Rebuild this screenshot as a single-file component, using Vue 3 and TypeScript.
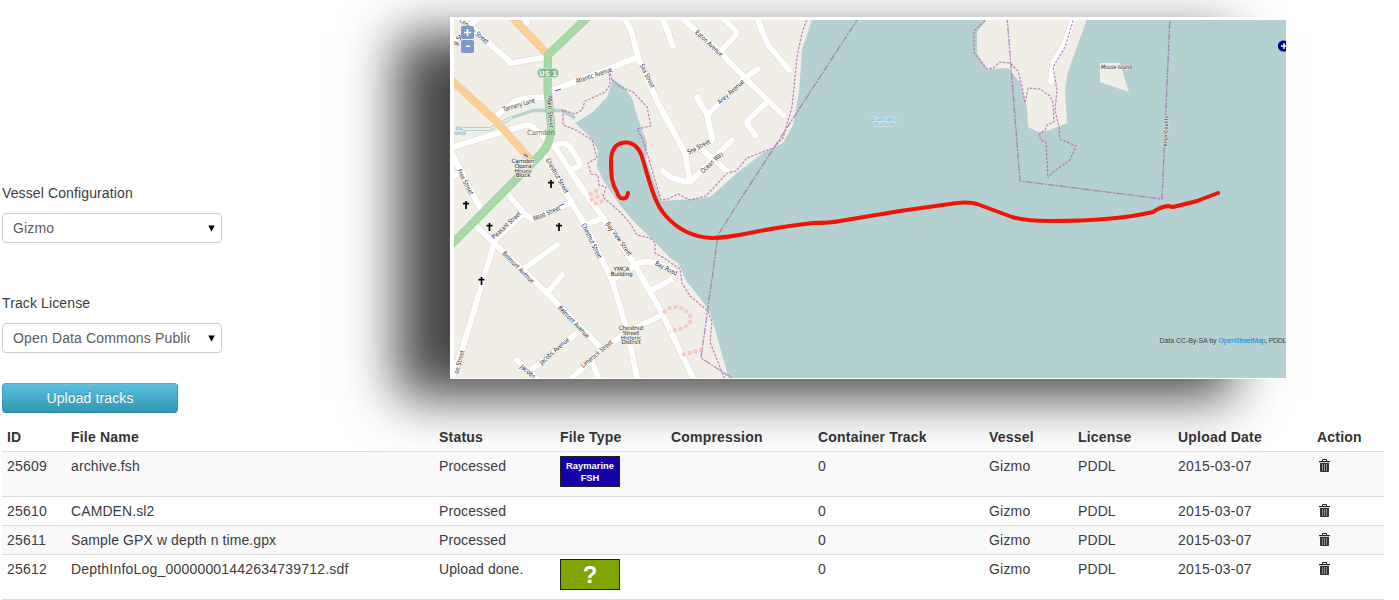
<script setup lang="ts">
interface Track {
  id: number
  file: string
  status: string
  badge?: 'fsh' | 'unknown'
  container: number
  vessel: string
  license: string
  date: string
}

interface Label {
  text: string
  x: number
  y: number
  angle: number
  length: number
}

const tracks: Track[] = [
  { id: 25609, file: 'archive.fsh', status: 'Processed', badge: 'fsh', container: 0, vessel: 'Gizmo', license: 'PDDL', date: '2015-03-07' },
  { id: 25610, file: 'CAMDEN.sl2', status: 'Processed', container: 0, vessel: 'Gizmo', license: 'PDDL', date: '2015-03-07' },
  { id: 25611, file: 'Sample GPX w depth n time.gpx', status: 'Processed', container: 0, vessel: 'Gizmo', license: 'PDDL', date: '2015-03-07' },
  { id: 25612, file: 'DepthInfoLog_00000001442634739712.sdf', status: 'Upload done.', badge: 'unknown', container: 0, vessel: 'Gizmo', license: 'PDDL', date: '2015-03-07' },
]

const selects = [
  { label: 'Vessel Configuration', value: 'Gizmo' },
  { label: 'Track License', value: 'Open Data Commons Public' },
]

// Street geometry, in map pixels
const streets: string[] = [
  'M455 15L476 31L511 63L547 57',
  'M453 42L478 18',
  'M524 16L527 23',
  'M551 91L600 72L638 57',
  'M623 16L631 30L638 57L658 103L685 153L690 182',
  'M663 171Q672 181 690 182L732 140',
  'M700 148L727 171',
  'M685 154L710 142Q713 140 712 136L707 115L697 97',
  'M707 115L745 78L758 69',
  'M680 16L720 52L745 78L783 115',
  'M721 16L734 29Q738 32 735 36L720 52',
  'M662 16L673 46',
  'M756 16L768 45L789 70',
  'M767 102L749 119Q746 122 748 125L755 135',
  'M547 97Q520 98 514 102L495 117',
  'M450 148L495 134L523 126Q531 124 535 129L555 147L573 175L603 218L635 265L662 313L695 382',
  'M555 146Q564 140 570 147L580 163Q580 168 570 169',
  'M545 157L567 195L585 225L612 280L627 330L638 382',
  'M585 225L603 218',
  'M508 194L524 213L532 219L570 203',
  'M495 240L524 213',
  'M450 150L473 195L483 212',
  'M450 178L462 171',
  'M477 227L493 242L547 293L602 349',
  'M494 244L462 350L452 378',
  'M525 268L557 245',
  'M547 293L562 275',
  'M578 332L530 371',
  'M517 360L540 382',
  'M568 382L600 351L627 332L660 316',
  'M592 362L600 382',
  'M612 280L635 265Q642 260 657 263L673 270Q678 276 669 281L652 290',
  'M1074 16L1065 43L1053 63L1051 82',
]

const dashedPaths: string[] = [
  'M612 80L609 69L610 85L605 92L590 99L585 101L582 110L575 114L563 110V125L576 130L592 140L597 158L588 163L591 174L598 175L599 185L606 187L603 197L620 212L630 223L637 235L650 238L655 243L655 253L664 258L680 269L682 283L690 296L708 311L712 322L710 342L716 357L725 380',
  'M612 80L620 87L633 92L647 107L651 126L637 129L643 140L650 163L661 200L668 199L678 194L690 200L706 196L727 173L736 171L747 158L773 148L783 138L792 107L797 57L802 33L808 16',
  'M988 18L974 31V53L982 63L987 69L993 68L1000 62L1010 63L1018 71L1022 86L1025 103L1028 88L1040 89L1050 96L1053 103L1054 122L1047 125L1045 130L1039 135L1041 140L1046 142L1048 178L1053 172L1070 160L1076 146L1060 139L1059 127L1055 110L1057 90L1053 67L1065 47L1074 18',
]

const borders: string[] = [
  'M1007 16L1020 181L1162 199L1170 16',
  'M859 17L740 200L718 235L701 358L735 380',
]

const labels: Label[] = [
  { text: 'Conway Street', x: 474, y: 31, angle: 41, length: 36 },
  { text: 'g St', x: 458, y: 40, angle: -55, length: 12 },
  { text: 'Atlantic Avenue', x: 594, y: 75.5, angle: -19, length: 38 },
  { text: 'Tannery Lane', x: 519, y: 105, angle: -17, length: 33 },
  { text: 'Main Street', x: 550, y: 112, angle: 87, length: 32 },
  { text: 'Sea Street', x: 647, y: 76, angle: 64, length: 26 },
  { text: 'Eaton Avenue', x: 709, y: 43.5, angle: 43, length: 35 },
  { text: 'Arey Avenue', x: 731, y: 92, angle: -42, length: 33 },
  { text: 'Sea Street', x: 699, y: 147, angle: -27, length: 25 },
  { text: 'Ocean Way', x: 712, y: 162.5, angle: -43, length: 28 },
  { text: 'Chestnut Street', x: 557, y: 176, angle: 60, length: 39 },
  { text: 'Free Street', x: 465, y: 182, angle: 63, length: 28 },
  { text: 'Pleasant Street', x: 506.5, y: 225.5, angle: -43, length: 37 },
  { text: 'Wood Street', x: 546.5, y: 213.5, angle: -23, length: 29 },
  { text: 'Chestnut Street', x: 591.5, y: 241, angle: 64, length: 38 },
  { text: 'Bay View Street', x: 618.5, y: 239, angle: 54, length: 40 },
  { text: 'Belmont Avenue', x: 518, y: 267.5, angle: 45, length: 42 },
  { text: 'Belmont Avenue', x: 573.5, y: 322, angle: 46, length: 42 },
  { text: 'Jacobs Avenue', x: 554.5, y: 351, angle: -41, length: 37 },
  { text: 'Limerock Street', x: 597, y: 354, angle: -40, length: 39 },
  { text: 'Jacobs A', x: 530, y: 373.5, angle: 41, length: 24 },
  { text: 'on Street', x: 459.5, y: 362, angle: -75, length: 24 },
  { text: 'Bay Road', x: 666, y: 268.5, angle: 27, length: 24 },
]

const places = [
  { x: 523, y: 163, lines: ['Camden', 'Opera', 'House', 'Block'] },
  { x: 621.5, y: 271, lines: ['YMCA', 'Building'] },
  { x: 631, y: 330, lines: ['Chestnut', 'Street', 'Historic', 'District'] },
]

const crosses: [number, number][] = [
  [551, 184], [466, 205], [489.5, 227], [559, 227], [481.5, 281],
]

// Names made mostly of digits are spaced like the other numeric columns
const isNumeric = (name: string): boolean => /\d{8}/.test(name)
</script>

<template>
  <main class="page">
    <section class="top">
      <form class="settings" @submit.prevent>
        <div v-for="s in selects" :key="s.label" class="field">
          <label class="field-label">{{ s.label }}</label>
          <div class="select" role="listbox">
            <span class="select-value">{{ s.value }}</span>
            <svg class="arrow" width="7" height="7" viewBox="0 0 7 7"><path d="M0.3 0.500H6.700L3.500 6.700Z" fill="#000" /></svg>
          </div>
        </div>
        <button class="upload" type="button">Upload tracks</button>
      </form>

      <div class="map-frame">
        <svg class="map" width="832" height="358" viewBox="454 20 832 358">
          <rect x="454" y="20" width="832" height="358" fill="#f1eee8" />
          <path
            fill="#b5d0d0"
            d="M613 79L623 86L632 98L637 116L647 143L646 160L661 201L693 199L710 197L737 173L763 153L783 143L793 125L799 93L802 50L813 16H1290V382H730L727 372L710 312L700 298L687 282L678 263L670 258L653 240L635 223L620 205L603 180L597 167L598 150L590 137L575 123L593 112L607 97Z"
          />
          <path fill="#f1eee8" d="M989 16L977 32V53L987 69L1008 68L1020 82L1027 107L1028 127L1038 132L1050 130L1067 123L1065 90L1068 72L1088 16Z" />
          <path fill="#f1eee8" d="M1100 63H1120L1129 92L1100 82Z" />

          <g fill="none" stroke-linejoin="round">
            <path d="M460 127.500H490L512 116" stroke="#b5d0d0" stroke-width="1" />
            <path d="M460 130.500H490L512 119" stroke="#b5d0d0" stroke-width="1" />
            <path d="M512 117.500L533 110.500H562L575 118" stroke="#b5d0d0" stroke-width="3.400" />
            <g stroke="#e0dcd8" stroke-width="7" stroke-linecap="round">
              <path v-for="d in streets" :key="d" :d="d" />
            </g>
            <g stroke="#fff" stroke-width="5.800" stroke-linecap="round">
              <path v-for="d in streets" :key="d" :d="d" />
            </g>
            <g stroke="#e3c9a6" stroke-width="7.800">
              <path d="M508 13L548 55" />
              <path d="M450 79L495 120L530 159" />
            </g>
            <g stroke="#fdcf95" stroke-width="6.800">
              <path d="M508 13L548 55" />
              <path d="M450 79L495 120L530 159" />
            </g>
            <path d="M593 12L548 55L547.500 90L551 125Q552 143 541 154L450 246" stroke="#9ccb9c" stroke-width="8.200" />
            <path d="M593 12L548 55L547.500 90L551 125Q552 143 541 154L450 246" stroke="#a7d9a7" stroke-width="7" />

            <g stroke="#f6c9c6" stroke-width="4" stroke-dasharray="4 2">
              <path d="M663 313Q677 300 690 315Q694 328 670 331" />
              <path d="M682 355L703 349" />
              <path d="M589 195L600 189M590 200L602 195M594 204L605 200" />
            </g>
            <g stroke="#b464b4" stroke-opacity=".8" stroke-width="1.200" stroke-dasharray="2.600 1.400">
              <path v-for="d in dashedPaths" :key="d" :d="d" />
            </g>
            <g stroke="#9d6fad" stroke-opacity=".75" stroke-width="1.300" stroke-dasharray="7 1.200 2 1.200">
              <path v-for="d in borders" :key="d" :d="d" />
            </g>
          </g>
          <path d="M555 91L561 89M524 154L528 157M547 160L549 163M559 206L564 204" stroke="#5c5cf0" stroke-width="1.300" />

          <g class="street-label">
            <text
              v-for="(l, i) in labels"
              :key="i"
              :transform="`translate(${l.x} ${l.y}) rotate(${l.angle})`"
              y="2"
              :textLength="l.length"
              lengthAdjust="spacingAndGlyphs"
            >{{ l.text }}</text>
          </g>
          <g v-for="p in places" :key="p.x" class="place">
            <text v-for="(t, i) in p.lines" :key="t" :x="p.x" :y="p.y + i * 4.8">{{ t }}</text>
          </g>
          <text class="town" x="541" y="135" textLength="28">Camden</text>
          <text class="water" x="884" y="120.500">Camden</text>
          <text class="water" x="884" y="125.500">Harbor</text>
          <text class="water pond" x="459" y="130">os</text>
          <text class="water pond" x="460" y="135">ond</text>
          <text class="island" x="1116.500" y="68.500" textLength="31" lengthAdjust="spacingAndGlyphs">Mouse Island</text>
          <text class="county" transform="translate(1167.500 131) rotate(-88)" textLength="31">Knox County</text>

          <rect x="537.500" y="68.500" width="21" height="9" rx="4" fill="#8ab68a" stroke="#c5dfc2" />
          <text class="shield" x="548" y="75.600">US 1</text>

          <g stroke="#000" stroke-width="1.700">
            <path v-for="c in crosses" :key="c.join()" :d="`M${c[0]} ${c[1] - 4}v8M${c[0] - 3} ${c[1] - 1.3}h6`" />
          </g>

          <path
            d="M628 193Q627 199 623 198.500Q619 199 617 192C612 184 611 176 611 162C611 149 616 143 625 142.500C635 142 640 149 643 160C650 183 654 202 665 215C676 228 692 237 712 238C740 238 755 229 813 223Q830 223 840 221L900 211L950 204Q967 201 977 204L1012 217Q1025 221 1050 221Q1115 221 1153 212Q1160 207 1168 206L1173 207L1197 201L1218 193"
            fill="none" stroke="#ee1505" stroke-width="4" stroke-linecap="round" stroke-linejoin="round"
          />

          <rect x="461" y="26" width="13" height="13" rx="2" fill="#7c9bc6" />
          <rect x="461" y="40" width="13" height="13" rx="2" fill="#7c9bc6" />
          <path d="M464 32.500H471M467.500 29V36M466 46.200H470" stroke="#fff" stroke-width="1.600" />
          <circle cx="1283.500" cy="46" r="5.600" fill="#00008b" />
          <path d="M1281 46H1287M1284 43V49" stroke="#fff" stroke-width="1.500" />

          <text class="credit" x="1159.500" y="343" textLength="57">Data CC-By-SA by</text>
          <text class="credit link" x="1218.500" y="343" textLength="47">OpenStreetMap</text>
          <text class="credit" x="1265.500" y="343" textLength="21">, PDDL</text>
        </svg>
      </div>
    </section>

    <table class="tracks">
      <colgroup>
        <col class="c-id"><col class="c-file"><col class="c-status"><col class="c-type"><col class="c-comp">
        <col class="c-cont"><col class="c-vessel"><col class="c-lic"><col class="c-date"><col class="c-act">
      </colgroup>
      <thead>
        <tr>
          <th>ID</th><th>File Name</th><th>Status</th><th>File Type</th><th>Compression</th>
          <th>Container Track</th><th>Vessel</th><th>License</th><th>Upload Date</th><th>Action</th>
        </tr>
      </thead>
      <tbody>
        <tr v-for="t in tracks" :key="t.id" :class="{ tall: t.badge }">
          <td>{{ t.id }}</td>
          <td :class="{ words: !isNumeric(t.file) }">{{ t.file }}</td>
          <td class="words">{{ t.status }}</td>
          <td>
            <div v-if="t.badge === 'fsh'" class="badge fsh">Raymarine<br>FSH</div>
            <div v-else-if="t.badge === 'unknown'" class="badge unknown">?</div>
          </td>
          <td></td>
          <td>{{ t.container }}</td>
          <td>{{ t.vessel }}</td>
          <td class="words">{{ t.license }}</td>
          <td>{{ t.date }}</td>
          <td>
            <svg class="trash" width="11" height="13" viewBox="0 0 11 13">
              <path d="M3.500 2V.5H7.500V2" fill="none" stroke="#222" />
              <path d="M0 2H11V3.200H0Z" fill="#222" />
              <path d="M1 4H10V12Q10 13 9 13H2Q1 13 1 12Z" fill="#333" />
              <path d="M3.500 5V12M5.500 5V12M7.500 5V12" stroke="#999" stroke-width=".9" />
            </svg>
          </td>
        </tr>
      </tbody>
    </table>
  </main>
</template>

<style>
body {
  margin: 0;
  background: #fff;
}
</style>

<style scoped>
.page {
  box-sizing: border-box;
  width: 1399px;
  height: 600px;
  overflow: hidden;
  font: 14px/20px "Liberation Sans", Arial, sans-serif;
  color: #3c3c3c;
}
.top {
  display: flex;
  height: 423px;
}
.settings {
  width: 448px;
  padding: 183px 0 0 2px;
  box-sizing: border-box;
}
.field {
  height: 110px;
}
.field:nth-child(2) {
  height: 90px;
}
.field-label {
  display: block;
  height: 30px;
  letter-spacing: 0.12px;
}
.select {
  display: flex;
  align-items: center;
  box-sizing: border-box;
  width: 220px;
  height: 30px;
  padding: 0 6px 0 10px;
  border: 1px solid #ccc;
  border-radius: 4px;
  background: #fff;
  color: #5c5c5c;
}
.select-value {
  width: 177px;
  overflow: hidden;
  white-space: nowrap;
  letter-spacing: 0.15px;
}
.arrow {
  margin-left: auto;
}
.upload {
  display: block;
  width: 176px;
  height: 30px;
  padding: 0;
  border: 1px solid #3a96b2;
  border-color: #4fadc9 #3a9ab8 #2a85a0;
  border-radius: 4px;
  background: linear-gradient(#5bc0de, #2f96b4);
  color: #fff;
  font: inherit;
  letter-spacing: 0.12px;
  text-shadow: 0 -1px 0 rgba(0, 0, 0, 0.25);
}
.map-frame {
  box-sizing: border-box;
  width: 836px;
  height: 362px;
  margin: 17px 0 0 2px;
  padding: 3px 0 1px 4px;
  background: #fff;
  box-shadow: -53px 18px 50px #474747;
}
.map {
  display: block;
}
.map text {
  text-anchor: middle;
  font-family: "DejaVu Sans", "Noto Sans", sans-serif;
  font-size: 6px;
  fill: #2a2a2a;
}
.map .street-label text {
  font-size: 6.6px;
  stroke: #fff;
  stroke-width: 0.8px;
  paint-order: stroke;
}
.map .place text {
  font-size: 5.8px;
  letter-spacing: -0.2px;
  stroke: #f7f5f1;
  stroke-width: 1.5px;
  paint-order: stroke;
}
.map .town {
  font-size: 7px;
  fill: #777;
}
.map .water {
  font-size: 6px;
  fill: #6fa9d6;
  stroke: #e0eded;
  stroke-width: 1px;
  paint-order: stroke;
}
.map .island {
  font-style: italic;
  stroke: #f1f1ee;
  stroke-width: 1px;
  paint-order: stroke;
}
.map .county {
  font-size: 5px;
  stroke: #dfe6e6;
  stroke-width: 1px;
  paint-order: stroke;
}
.map .shield {
  font-size: 7px;
  font-weight: bold;
  fill: #f2f8f2;
}
.map .credit {
  text-anchor: start;
  font-family: "Liberation Sans", Arial, sans-serif;
  font-size: 7px;
  fill: #444;
}
.map .credit.link {
  fill: #1585d0;
}
.tracks {
  position: relative;
  width: 1382px;
  margin-left: 2px;
  table-layout: fixed;
  border-collapse: collapse;
  border-bottom: 1px solid #ddd;
}
.c-id { width: 64px; }
.c-file { width: 368px; }
.c-status { width: 121px; }
.c-type { width: 111px; }
.c-comp { width: 147px; }
.c-cont { width: 171px; }
.c-vessel { width: 89px; }
.c-lic { width: 100px; }
.c-date { width: 139px; }
.c-act { width: 72px; }
th,
td {
  box-sizing: border-box;
  height: 29px;
  padding: 4px 0 4px 5px;
  text-align: left;
  vertical-align: top;
  white-space: nowrap;
  letter-spacing: 0.2px;
}
th {
  height: 28px;
  padding-bottom: 3px;
  color: #333;
}
td {
  border-top: 1px solid #ddd;
}
.words {
  letter-spacing: 0.1px;
}
tbody tr:nth-child(odd) td {
  background: #f9f9f9;
}
.tall td {
  height: 45px;
}
.badge {
  box-sizing: border-box;
  width: 60px;
  height: 31px;
  border: 1px solid #222;
  color: #fff;
  font-weight: bold;
  text-align: center;
  letter-spacing: 0;
}
.fsh {
  padding-top: 3px;
  background: #1400a8;
  font-size: 9.4px;
  line-height: 12px;
}
.unknown {
  background: #7fa600;
  font-size: 24px;
  line-height: 30px;
}
.trash {
  display: block;
  margin: 3px 0 0 2px;
}
</style>
